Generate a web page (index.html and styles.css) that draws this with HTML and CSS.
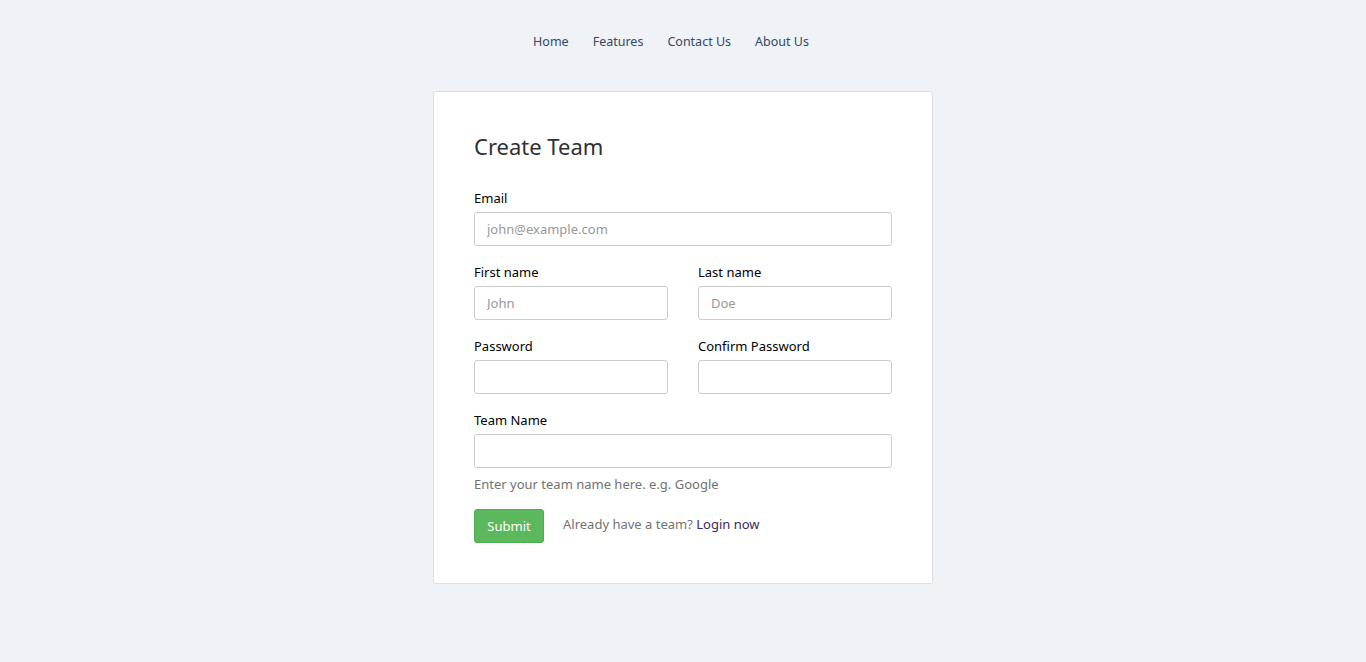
FILE: index.html
```html
<!DOCTYPE html>
<html lang="en">
<head>
    <meta charset="UTF-8">
    <meta name="viewport" content="width=device-width, initial-scale=1.0">
    <title>Create Team</title>
    <link rel="stylesheet" href="styles.css">
</head>
<body>
    <div id="navbar">
        <a href="#">Home</a>
        <a href="#">Features</a>
        <a href="#">Contact Us</a>
        <a href="#">About Us</a>
    </div>

    <div id="content">
        <form class="card">
            <h2>Create Team</h2>

            <div class="group">
                <label for="email">Email</label>
                <input id="email" type="email" placeholder="john@example.com">
            </div>

            <div class="row">
                <div class="group">
                    <label for="first">First name</label>
                    <input id="first" type="text" placeholder="John">
                </div>
                <div class="group">
                    <label for="last">Last name</label>
                    <input id="last" type="text" placeholder="Doe">
                </div>
            </div>

            <div class="row">
                <div class="group">
                    <label for="pass">Password</label>
                    <input id="pass" type="password">
                </div>
                <div class="group">
                    <label for="pass2">Confirm Password</label>
                    <input id="pass2" type="password">
                </div>
            </div>

            <div class="group last">
                <label for="team">Team Name</label>
                <input id="team" type="text">
                <p class="help">Enter your team name here. e.g. Google</p>
            </div>

            <div class="actions">
                <button type="submit" class="btn">Submit</button>
                <span class="already">Already have a team? <a href="#">Login now</a></span>
            </div>
        </form>
    </div>
</body>
</html>
```

FILE: styles.css
```css
body {
    margin: 0;
    padding: 0;
    background-color: #eff2f7;
    font-family: "Noto Sans", "Open Sans", sans-serif;
    font-size: 13px;
    color: #000;
}

#navbar {
    display: flex;
    justify-content: center;
    gap: 24px;
    padding: 32px 24px 0 0;
    height: 60px;
    box-sizing: border-box;
}

#navbar a {
    text-decoration: none;
    color: #34495e;
    font-size: 12.5px;
    line-height: 20px;
}

#content {
    display: flex;
    justify-content: center;
}

.card {
    width: 500px;
    box-sizing: border-box;
    background: #fff;
    border: 1px solid #dcdfe3;
    border-radius: 3px;
    padding: 40px;
    margin-top: 31px;
}

.card h2 {
    margin: 0 0 28px;
    font-size: 22px;
    line-height: 28px;
    font-weight: normal;
    color: #2f3133;
}

.group {
    margin-bottom: 16px;
}

.group label {
    display: block;
    line-height: 20px;
    margin-bottom: 4px;
    font-weight: normal;
    color: #000;
}

.group input {
    display: block;
    width: 100%;
    height: 34px;
    box-sizing: border-box;
    border: 1px solid #ccc;
    border-radius: 3px;
    padding: 0 12px;
    font-family: inherit;
    font-size: 13px;
    color: #555;
}

.group input::placeholder {
    color: #999;
}

.row {
    display: grid;
    grid-template-columns: 1fr 1fr;
    gap: 30px;
}

.help {
    margin: 7px 0 0;
    line-height: 18px;
    font-size: 13px;
    color: #737373;
}

.actions {
    display: flex;
    align-items: center;
}

.btn {
    height: 34px;
    width: 70px;
    background: #5cb85c;
    border: 1px solid #4cae4c;
    border-radius: 3px;
    color: #fff;
    font-family: inherit;
    font-size: 13px;
    cursor: pointer;
}

.already {
    margin-left: 19px;
    color: #737373;
    margin-top: -4px;
}

.already a {
    color: #3b2a5a;
    text-decoration: none;
}
```
